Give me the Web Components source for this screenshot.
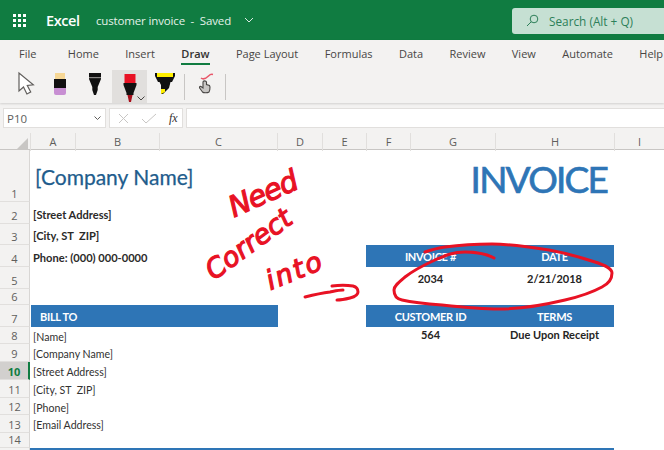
<!DOCTYPE html>
<html lang="en">
<head>
<meta charset="utf-8">
<title>Excel - customer invoice</title>
<style>
  html, body { margin: 0; height: 450px; overflow: hidden; background: #fff; }
  body { position: relative; font-family: "Open Sans", sans-serif; }
  xl-titlebar, xl-ribbon, xl-formula-bar, xl-sheet { width: 664px; }
</style>
</head>
<body>
<xl-titlebar doc="customer invoice" status="Saved"></xl-titlebar>
<xl-ribbon></xl-ribbon>
<xl-formula-bar cell="P10"></xl-formula-bar>
<xl-sheet></xl-sheet>
<xl-ink></xl-ink>

<script>
class XlTitlebar extends HTMLElement {
  constructor() {
    super()
    const dots = Array.from({ length: 9 }, () => '<i></i>').join('')
    this.attachShadow({ mode: 'open' }).innerHTML = `
      <style>
        :host { display: flex; align-items: center; height: 40px; background: #107c41; color: #fff; font-family: "Open Sans", sans-serif; overflow: hidden; }
        .waffle { display: grid; grid-template-columns: repeat(3, 3px); gap: 2px; margin-left: 13px; }
        .waffle i { width: 3px; height: 3px; background: #fff; }
        .app { margin-left: 20px; font-size: 14.500px; font-weight: 600; letter-spacing: -0.4px; width: 50px; }
        .doc { font-size: 11.500px; color: #e4f1e9; white-space: pre; letter-spacing: -0.15px; }
        svg.chev { margin-left: 13px; }
        .search { display: flex; align-items: center; margin-left: auto; width: 152px; height: 26px; margin-top: 1px; box-sizing: border-box; padding-left: 14px; gap: 10px; background: #c6e0d3; border-radius: 3px 0 0 3px; color: #2d7f59; font-size: 11.800px; }
      </style>
      <div class="waffle">${dots}</div>
      <div class="app">Excel</div>
      <div class="doc">${this.getAttribute('doc')}  -  ${this.getAttribute('status')}</div>
      <svg class="chev" width="10" height="6" viewBox="0 0 10 6" fill="none" stroke="#dcebe3" stroke-width="1"><path d="M1 1l4 4 4-4"/></svg>
      <div class="search">
        <svg width="13" height="13" viewBox="0 0 13 13" fill="none" stroke="#2d7f59" stroke-width="1"><circle cx="8" cy="5" r="3.800"/><path d="M5.200 7.800L1 12"/></svg>
        <span>Search (Alt + Q)</span>
      </div>`
  }
}

class XlRibbon extends HTMLElement {
  constructor() {
    super()
    const tabs = ['File', 'Home', 'Insert', 'Draw', 'Page Layout', 'Formulas', 'Data', 'Review', 'View', 'Automate', 'Help']
    this.attachShadow({ mode: 'open' }).innerHTML = `
      <style>
        :host { display: block; height: 63px; background: #f3f2f1; font-family: "Open Sans", sans-serif; box-shadow: 0 1px 2px rgba(0,0,0,.14); position: relative; }
        .tabs { display: flex; height: 25px; padding-left: 19px; gap: 26.400px; font-size: 11px; color: #484644; white-space: nowrap; overflow: hidden; }
        .tabs span { position: relative; line-height: 28px; flex: none; }
        .tabs span:first-child { margin-right: 5px; }
        .tabs .on { color: #323130; font-weight: 600; }
        .tabs .on::after { content: ""; position: absolute; left: 0; right: 0; bottom: 0; height: 2px; background: #107c41; }
        .tools { display: flex; align-items: flex-start; height: 38px; padding-left: 7px; }
        .btn { width: 35px; height: 33px; margin-top: 5px; display: flex; justify-content: center; position: relative; }
        .btn svg { display: block; }
        .btn.sel { background: #e1dfdd; }
        .sep { width: 1px; height: 26px; margin-top: 9px; background: #c8c6c4; }
        .gap { width: 2px; }
        .chev { position: absolute; right: 2px; bottom: 2px; }
      </style>
      <div class="tabs">${tabs.map((t) => `<span class="${t === 'Draw' ? 'on' : ''}">${t}</span>`).join('')}</div>
      <div class="tools">
        <div class="btn"><svg width="24" height="26" viewBox="0 0 24 26" fill="#fff" stroke="#605e5c" stroke-width="1.200"><path d="M6 3l0 18 4.500-4 3.400 7 3.800-2-3.400-6.600 6-.6z"/></svg></div>
        <div class="btn"><svg width="14" height="26" viewBox="0 0 14 26"><path d="M2 3h10v6H2z" fill="#f6d795"/><path d="M1 9h12v9H1z" fill="#111"/><path d="M1 18h12v5q0 2-2 2H3q-2 0-2-2z" fill="#c88fd3"/></svg></div>
        <div class="btn"><svg width="16" height="26" viewBox="0 0 16 26"><path d="M2 3h12v6l-3.300 8v3l-1.700 5h-2l-1.700-5v-3L2 9z" fill="#111"/><path d="M2 7h12v1.200H2z" fill="#8a8886"/></svg></div>
        <div class="btn sel"><svg width="16" height="32" viewBox="0 0 16 32"><path d="M2.500 4h11v9h-11z" fill="#e81224"/><path d="M1.500 13h13v2l-3 8v2h-7v-2l-3-8z" fill="#111"/><path d="M5.500 25h5l-1.500 7H7z" fill="#a80f1c"/></svg>
          <svg class="chev" width="8" height="5" viewBox="0 0 8 5" fill="none" stroke="#484644"><path d="M.5.5L4 4l3.500-3.500"/></svg></div>
        <div class="btn"><svg width="22" height="26" viewBox="0 0 22 26"><path d="M1 3h20v3l-3 6H4L1 6z" fill="#111"/><path d="M3 3h16v4H3z" fill="#ffef00"/><path d="M5.500 12h11l-1.500 6-2 2-4 4h-2v-9z" fill="#111"/><path d="M7 19h4v3l-4 2z" fill="#ffef00"/></svg></div>
        <div class="gap"></div><div class="sep"></div>
        <div class="btn" style="width:40px"><svg width="20" height="26" viewBox="0 0 20 26" fill="none"><path d="M6 8c2.500 2 6-.5 7.500-2s2.500-2 4.500-1.500" stroke="#e8576a" stroke-width="1.500"/><path d="M8 12v6l-2-1.500c-1.500-.5-2 1-1 2l2.500 3.500c1 1 5 1 6.500 0 1-1 1-2.500 1-5l-.5-1.500-3-1V12c-.5-1.500-3.500-1.500-3.500 0z" fill="#c8c6c4" stroke="#484644" stroke-width="1.100"/></svg></div>
        <div class="sep"></div>
      </div>`
  }
}

class XlFormulaBar extends HTMLElement {
  constructor() {
    super()
    this.attachShadow({ mode: 'open' }).innerHTML = `
      <style>
        :host { display: flex; height: 30px; box-sizing: border-box; padding: 5px 0 6px 3px; gap: 3px; background: #f3f2f1; font-family: "Open Sans", sans-serif; }
        .box { background: #fff; border: 1px solid #e1dfdd; box-sizing: border-box; height: 20px; display: flex; align-items: center; }
        .name { width: 103px; padding: 0 4px 0 3px; justify-content: space-between; font-size: 11.500px; color: #605e5c; }
        .fn { width: 74px; padding-left: 7px; gap: 11px; }
        .fx { font: italic 12px "Liberation Serif", serif; color: #323130; margin-left: 1px; }
        .input { flex: 1; border-right: 0; }
      </style>
      <div class="box name"><span>${this.getAttribute('cell')}</span>
        <svg width="7" height="5" viewBox="0 0 7 5" fill="none" stroke="#605e5c"><path d="M.5.5l3 3 3-3"/></svg></div>
      <div class="box fn">
        <svg width="13" height="13" viewBox="0 0 13 13" fill="none" stroke="#c8c6c4"><path d="M2 2l9 9M11 2l-9 9"/></svg>
        <svg width="16" height="13" viewBox="0 0 16 13" fill="none" stroke="#c8c6c4"><path d="M1 7l4 4L15 2"/></svg>
        <span class="fx">fx</span></div>
      <div class="box input"></div>`
  }
}

const COLS = [
  ['A', 45], ['B', 84], ['C', 118], ['D', 45], ['E', 44],
  ['F', 44], ['G', 85], ['H', 119], ['I', 50],
]
const ROWS = [52, 22, 21, 22, 22, 16, 22, 17, 18, 18, 18, 17, 18, 15]

// row, first column, last column (exclusive), class, text
const CELLS = [
  [1, 1, 4, 'company', '[Company Name]'],
  [1, 7, 9, 'title', 'INVOICE'],
  [2, 1, 4, 'info', '[Street Address]'],
  [3, 1, 4, 'info', '[City, ST&nbsp;&nbsp;ZIP]'],
  [4, 1, 4, 'info', 'Phone: (000) 000-0000'],
  [4, 6, 8, 'head', 'INVOICE #'],
  [4, 8, 9, 'head', 'DATE'],
  [5, 6, 8, 'val', '2034'],
  [5, 8, 9, 'val', '2/21/2018'],
  [7, 1, 4, 'head left', 'BILL TO'],
  [7, 6, 8, 'head', 'CUSTOMER ID'],
  [7, 8, 9, 'head', 'TERMS'],
  [8, 6, 8, 'val top', '564'],
  [8, 8, 9, 'val top', 'Due Upon Receipt'],
  [8, 1, 4, 'plain', '[Name]'],
  [9, 1, 4, 'plain', '[Company Name]'],
  [10, 1, 4, 'plain', '[Street Address]'],
  [11, 1, 4, 'plain', '[City, ST&nbsp;&nbsp;ZIP]'],
  [12, 1, 4, 'plain', '[Phone]'],
  [13, 1, 4, 'plain', '[Email Address]'],
]

class XlSheet extends HTMLElement {
  constructor() {
    super()
    const tracks = '30px ' + COLS.map((c) => c[1] + 'px').join(' ')
    const colHeads = COLS.map((c) => `<div class="col">${c[0]}</div>`).join('')
    const rowHeads = ROWS.map((_, i) =>
      `<div class="row ${i === 9 ? 'active' : ''}" style="grid-row:${i + 1}">${i + 1}</div>`).join('')
    const cells = CELLS.map(([r, a, b, cls, text]) =>
      `<div class="cell ${cls}" style="grid-row:${r};grid-column:${a + 1}/${b + 1}">${text}</div>`).join('')
    this.attachShadow({ mode: 'open' }).innerHTML = `
      <style>
        :host { display: block; font-family: "Lato", sans-serif; overflow: hidden; height: 317px; }
        .heads, .body { display: grid; grid-template-columns: ${tracks}; }
        .heads { height: 17px; box-sizing: border-box; background: #f3f2f1; border-bottom: 1px solid #c8c6c4; font-family: "Open Sans", sans-serif; }
        .col { font-size: 11px; color: #605e5c; text-align: center; line-height: 18px; border-left: 1px solid #e1dfdd; box-sizing: border-box; }
        .corner { position: relative; }
        .corner::after { content: ""; position: absolute; right: 2px; bottom: 1px; border: 6px solid transparent; border-right-color: #c8c6c4; border-bottom-color: #c8c6c4; }
        .body { grid-template-rows: ${ROWS.map((h) => h + 'px').join(' ')} 2px; }
        .row { grid-column: 1; background: #f3f2f1; border-bottom: 1px solid #e1dfdd; border-right: 1px solid #d8d6d4; box-sizing: border-box; font: 11px/1 "Open Sans", sans-serif; color: #605e5c; display: flex; align-items: flex-end; justify-content: center; padding-bottom: 2px; }
        .row.active { background: #d2d0ce; color: #107c41; font-weight: 700; border-right: 2px solid #107c41; }
        .cell { display: flex; align-items: center; white-space: nowrap; color: #252423; font-size: 11px; min-width: 0; padding-left: 3px; }
        .company { color: #215c8c; font-size: 21px; align-items: flex-end; padding: 0 0 13px 5px; -webkit-text-stroke: .25px #215c8c; }
        .title { color: #2e75b6; font-size: 37px; letter-spacing: -1.800px; justify-content: flex-end; align-items: flex-end; padding: 0 7px 1px 0; -webkit-text-stroke: .7px #2e75b6; }
        .info { font-weight: 700; font-size: 11.100px; color: #2b2a29; padding-top: 2px; }
        .plain { font-size: 10.600px; color: #323130; padding-top: 2px; }
        .head { background: #2e75b6; color: #fff; font-weight: 700; font-size: 11px; letter-spacing: -.3px; justify-content: center; padding: 0; }
        .head.left { justify-content: flex-start; padding-left: 9px; margin-left: 1px; margin-right: -1px; }
        .val { justify-content: center; padding: 1px 0 0; font-weight: 700; font-size: 11px; color: #252423; }
        .val.top { align-items: flex-start; padding: 1px 0 0; }
        .rule { grid-row: 15; grid-column: 2 / 10; background: #2e75b6; }
      </style>
      <div class="heads"><div class="corner"></div>${colHeads}</div>
      <div class="body">${rowHeads}${cells}<div class="row" style="grid-row:15;border-bottom:0"></div><div class="rule"></div></div>`
  }
}

class XlInk extends HTMLElement {
  constructor() {
    super()
    this.attachShadow({ mode: 'open' }).innerHTML = `
      <style>
        :host { position: absolute; inset: 0; display: block; pointer-events: none; }
        svg { position: absolute; inset: 0; }
        span { position: absolute; color: #e81224; font: italic 400 29px "DejaVu Sans", sans-serif; line-height: 1; transform-origin: 0 100%; white-space: nowrap; -webkit-text-stroke: 1.200px #e81224; }
      </style>
      <svg width="664" height="450" viewBox="0 0 664 450" fill="none" stroke="#e81224" stroke-width="3" stroke-linecap="round" stroke-linejoin="round">
        <path d="M494 258C485 253 475 252 465 252C452 252 444 256 435 260C424 265 414 270 405 277C399 282 394 286 394 290C394 296 397 299 402 300C415 303 428 304 442 305C461 307 480 309 499 309C522 309 544 305 565 300C578 297 591 293 602 287C608 284 612 279 612 273C612 268 604 265 595 262C580 257 565 253 549 250C530 247 511 244 492 244C476 244 460 245 445 247C438 248 431 250 425 252"/>
        <path d="M305 297C313 295 322 293 330 292C335 291 339 290 343 290M332 286C339 285 347 285 353 286C357 287 358 290 358 292C358 295 354 297 350 298C346 299 341 300 337 300"/>
      </svg>
      <span style="left:236px;top:193px;transform:rotate(-24deg);font-size:29px;letter-spacing:-1px">Need</span>
      <span style="left:216px;top:257px;transform:rotate(-36deg);font-size:27px;letter-spacing:0">Correct</span>
      <span style="left:272px;top:267px;transform:rotate(-22deg);font-size:27px;letter-spacing:2px">into</span>`
  }
}

customElements.define('xl-titlebar', XlTitlebar)
customElements.define('xl-ribbon', XlRibbon)
customElements.define('xl-formula-bar', XlFormulaBar)
customElements.define('xl-sheet', XlSheet)
customElements.define('xl-ink', XlInk)
</script>
</body>
</html>
